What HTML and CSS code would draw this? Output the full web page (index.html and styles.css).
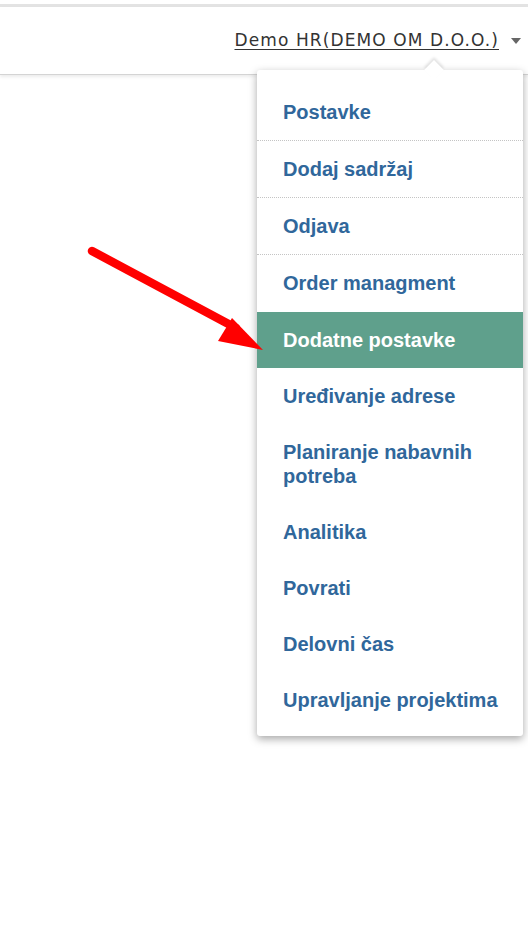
FILE: index.html
```html
<!DOCTYPE html>
<html lang="hr">
<head>
    <meta charset="UTF-8">
    <title>Dodatne postavke</title>
    <link rel="stylesheet" href="styles.css">
</head>
<body>
    <div class="page">
        <div class="topstrip"></div>
        <div class="header">
            <a class="user" href="#">Demo HR(DEMO OM D.O.O.)</a>
            <span class="caret"></span>
        </div>

        <div class="dropdown">
            <ul class="menu">
                <li class="sep"><a href="#">Postavke</a></li>
                <li class="sep"><a href="#">Dodaj sadržaj</a></li>
                <li class="sep"><a href="#">Odjava</a></li>
                <li><a href="#">Order managment</a></li>
                <li class="active"><a href="#">Dodatne postavke</a></li>
                <li><a href="#">Uređivanje adrese</a></li>
                <li><a href="#">Planiranje nabavnih potreba</a></li>
                <li><a href="#">Analitika</a></li>
                <li><a href="#">Povrati</a></li>
                <li><a href="#">Delovni čas</a></li>
                <li><a href="#">Upravljanje projektima</a></li>
            </ul>
        </div>

        <!-- oznaka na snimci -->
        <svg class="pointer" width="300" height="400" viewBox="0 0 300 400">
            <line x1="92" y1="251" x2="236" y2="328" stroke="#ff0000" stroke-width="8.5" stroke-linecap="round"/>
            <polygon points="263,350 218,341 232,318" fill="#ff0000"/>
        </svg>
    </div>
</body>
</html>
```

FILE: styles.css
```css
*{ margin: 0; padding: 0; box-sizing: border-box; }
html,body{ background: #fff; font-family: "Liberation Sans", Arial, sans-serif; }

.page{ position: relative; min-height: 935px; }

.topstrip{ height: 7px; border-top: 4px solid #fff; background: #e3e3e3; }

.header{ height: 68px; background: #fff; border-bottom: 1px solid #d4d4d4; box-shadow: 0 2px 3px rgba(0,0,0,.08); display: flex; justify-content: flex-end; align-items: center; padding: 0 7px 0 0; }
.user{ font-family: "DejaVu Sans", Verdana, sans-serif; font-size: 17px; letter-spacing: 1.1px; color: #333; text-decoration: underline; text-underline-offset: 3px; margin-top: -1px; }
.caret{ width: 0; height: 0; border-left: 5px solid transparent; border-right: 5px solid transparent; border-top: 6px solid #666; margin-left: 12px; margin-top: 0; }

.dropdown{ position: absolute; left: 257px; top: 70px; width: 266px; background: #fff; border-radius: 3px; box-shadow: 0 3px 8px rgba(0,0,0,.35); padding: 14px 0 8px; }
.dropdown:before{ content: ""; position: absolute; left: 170px; top: -7px; width: 14px; height: 14px; background: #fff; transform: rotate(45deg); box-shadow: -2px -2px 3px rgba(0,0,0,.12); }

.menu{ list-style: none; position: relative; }
.menu li.sep{ border-bottom: 1px dotted #c4c4c4; }
.menu li.active{ margin-top: 1px; }
.menu a{ display: block; padding: 16px 20px 16px 26px; font-size: 20px; line-height: 24px; font-weight: bold; color: #30679b; text-decoration: none; }
.menu li.active a{ background: #5fa08c; color: #fff; }

.pointer{ position: absolute; left: 0; top: 0; }
```
